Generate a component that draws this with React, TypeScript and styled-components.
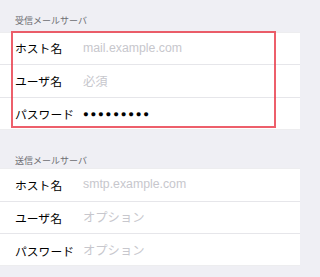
import styled, { createGlobalStyle } from "styled-components";

const GlobalStyle = createGlobalStyle`
  html, body {
    margin: 0;
    padding: 0;
    background: #efeff4;
  }
  body {
    font-family: "Liberation Sans", "Noto Sans CJK JP", sans-serif;
  }
`;

type Field = { label: string; value: string; placeholder?: boolean; secret?: boolean };

const incoming: Field[] = [
  { label: "ホスト名", value: "mail.example.com", placeholder: true },
  { label: "ユーザ名", value: "必須", placeholder: true },
  { label: "パスワード", value: "●●●●●●●●●", secret: true },
];

const outgoing: Field[] = [
  { label: "ホスト名", value: "smtp.example.com", placeholder: true },
  { label: "ユーザ名", value: "オプション", placeholder: true },
  { label: "パスワード", value: "オプション", placeholder: true },
];

function App() {
  return (
    <Page>
      <GlobalStyle />
      <SectionHeader $height={31.5} $pad={5.7}>受信メールサーバ</SectionHeader>
      <Group>
        {incoming.map((f) => (
          <Row key={f.label}>
            <Label>{f.label}</Label>
            <Value $placeholder={f.placeholder} $secret={f.secret}>
              {f.value}
            </Value>
          </Row>
        ))}
        <Highlight />
      </Group>
      <SectionHeader $height={38.5} $pad={2.5}>送信メールサーバ</SectionHeader>
      <Group>
        {outgoing.map((f) => (
          <Row key={f.label}>
            <Label>{f.label}</Label>
            <Value $placeholder={f.placeholder}>{f.value}</Value>
          </Row>
        ))}
      </Group>
    </Page>
  );
}

export default App;

const Page = styled.div`
  width: 300px;
  height: 277px;
  overflow: hidden;
  background: #efeff4;
`;

const SectionHeader = styled.div<{ $height: number; $pad: number }>`
  box-sizing: border-box;
  height: ${(p) => p.$height}px;
  display: flex;
  align-items: flex-end;
  padding: 0 15px ${(p) => p.$pad}px;
  font-size: 9px;
  line-height: 11px;
  color: #6d6d72;
  font-family: "Noto Sans CJK JP", sans-serif;
`;

const Group = styled.div`
  position: relative;
  background: #fff;
  box-shadow: inset 0 0.5px 0 #dcdce0, inset 0 -0.5px 0 #dcdce0;
`;

const Row = styled.div`
  position: relative;
  height: 32.5px;
  display: flex;
  align-items: center;
  padding-left: 15px;

  & + & {
    border-top: 0.7px solid #e6e6ea;
    height: 31.8px;
  }
`;

const Label = styled.div`
  width: 68px;
  flex-shrink: 0;
  font-family: "Noto Sans CJK JP", sans-serif;
  font-size: 11.8px;
  font-weight: 400;
  color: #000;
`;

const Value = styled.div<{ $placeholder?: boolean; $secret?: boolean }>`
  font-size: ${(p) => (p.$secret ? "9.5px" : "12.3px")};
  letter-spacing: ${(p) => (p.$secret ? "1.8px" : "normal")};
  color: ${(p) => (p.$placeholder ? "#c7c7cd" : "#000")};
  white-space: nowrap;
`;

const Highlight = styled.div`
  position: absolute;
  left: 11px;
  top: -0.5px;
  width: 265px;
  height: 97px;
  box-sizing: border-box;
  border: 2px solid rgba(232, 55, 70, 0.8);
  pointer-events: none;
`;
